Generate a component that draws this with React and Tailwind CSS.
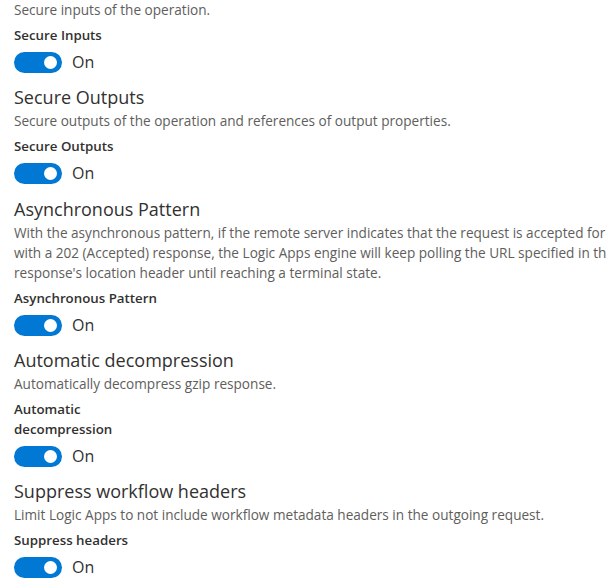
const sections = [
  {
    desc: ['Secure inputs of the operation.'],
    label: 'Secure Inputs',
  },
  {
    title: 'Secure Outputs',
    desc: ['Secure outputs of the operation and references of output properties.'],
    label: 'Secure Outputs',
  },
  {
    title: 'Asynchronous Pattern',
    desc: [
      'With the asynchronous pattern, if the remote server indicates that the request is accepted for processing',
      "with a 202 (Accepted) response, the Logic Apps engine will keep polling the URL specified in the",
      "response's location header until reaching a terminal state.",
    ],
    label: 'Asynchronous Pattern',
  },
  {
    title: 'Automatic decompression',
    desc: ['Automatically decompress gzip response.'],
    label: ['Automatic', 'decompression'],
  },
  {
    title: 'Suppress workflow headers',
    desc: ['Limit Logic Apps to not include workflow metadata headers in the outgoing request.'],
    label: 'Suppress headers',
  },
];

function Toggle() {
  return (
    <div className="flex items-center h-[22px]">
      <button className="w-12 h-[21px] rounded-full bg-[#0078d4] flex items-center justify-end pr-[5px]">
        <span className="w-[13px] h-[13px] rounded-full bg-white" />
      </button>
      <span className="ml-[10px] text-[16px] text-[#323130]">On</span>
    </div>
  );
}

export default function App() {
  return (
    <div
      className="w-[607px] h-[586px] overflow-hidden bg-white pl-[14px]"
      style={{ fontFamily: '"Open Sans", "Noto Sans", sans-serif' }}
    >
      {sections.map((s, i) => (
        <div key={i} className={i === 0 ? '' : i === 2 ? 'mt-[12px]' : 'mt-[11px]'}>
          {s.title && (
            <div className="text-[18px] leading-[26px] text-[#323130] whitespace-nowrap">{s.title}</div>
          )}
          <div className={`text-[13.6px] leading-[20px] text-[#605e5c] whitespace-nowrap ${s.title ? 'mt-[1px]' : ''}`}>
            {s.desc.map((line, j) => (
              <div key={j}>{line}</div>
            ))}
          </div>
          <div className="mt-[5px] text-[13.3px] leading-[20px] font-semibold text-[#323130]">
            {Array.isArray(s.label) ? s.label.map((l, j) => <div key={j}>{l}</div>) : s.label}
          </div>
          <div className="mt-[6px]">
            <Toggle />
          </div>
        </div>
      ))}
    </div>
  );
}
